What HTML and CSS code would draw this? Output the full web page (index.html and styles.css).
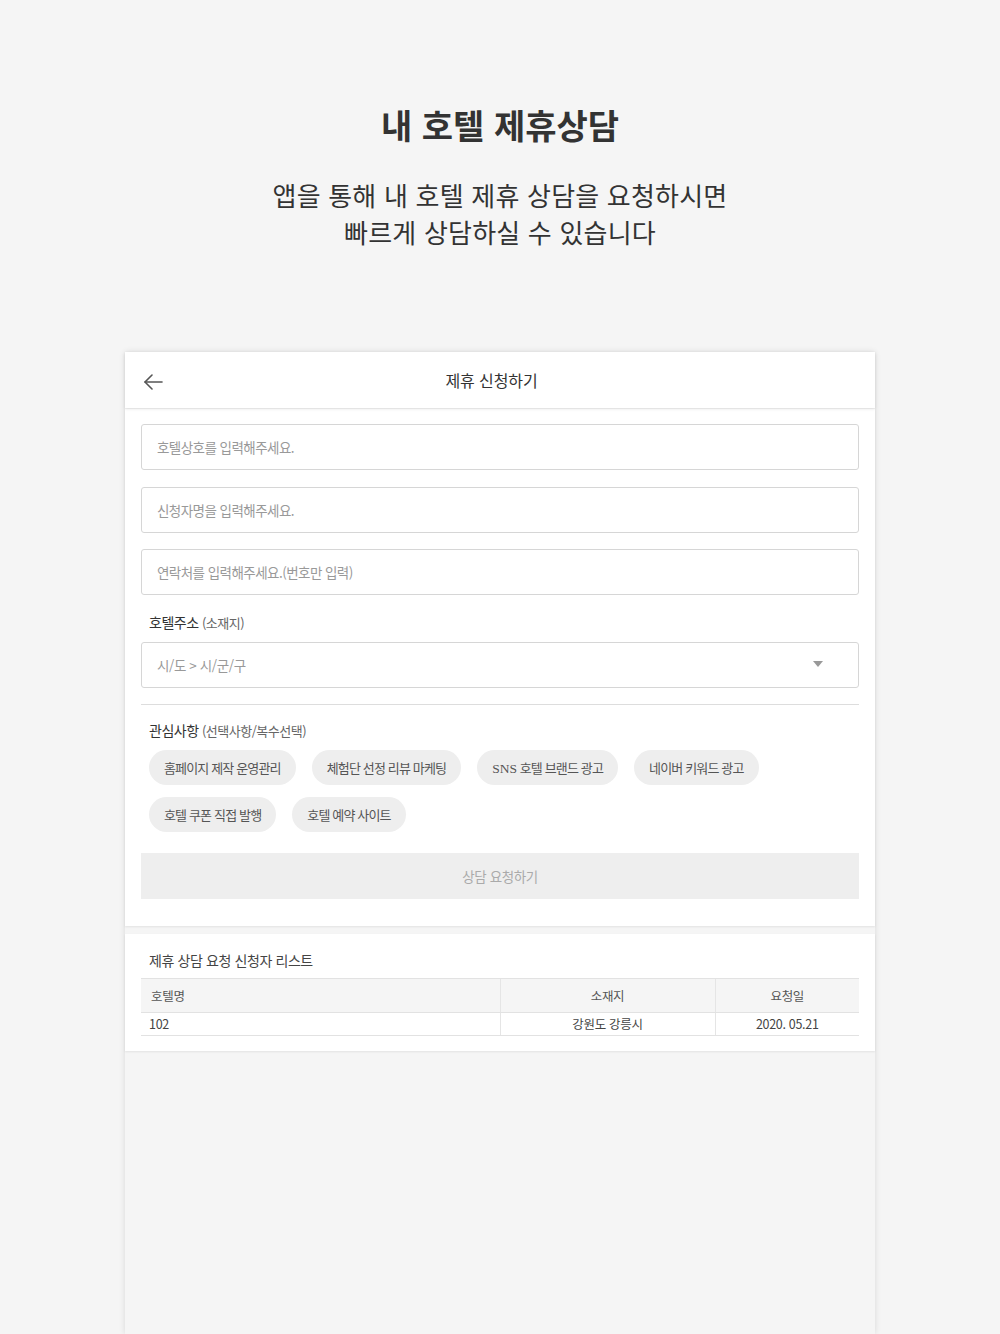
FILE: index.html
```html
<!DOCTYPE html>
<html lang="ko">
<head>
    <meta charset="UTF-8">
    <meta name="viewport" content="width=device-width, initial-scale=1.0">
    <title>내 호텔 제휴상담</title>
    <link rel="stylesheet" href="styles.css">
</head>
<body>
    <div class="intro">
        <h1 class="headline">내 호텔 제휴상담</h1>
        <p class="lead">앱을 통해 내 호텔 제휴 상담을 요청하시면<br>빠르게 상담하실 수 있습니다</p>
    </div>
    <div class="frame">
        <div class="topbar">
            <button type="button" class="back-btn" aria-label="뒤로">
                <svg width="20" height="16" viewBox="0 0 20 16" fill="none" stroke="#555" stroke-width="1.6" stroke-linecap="round" stroke-linejoin="round">
                    <path d="M19 8H2"/>
                    <path d="M9 1L2 8l7 7"/>
                </svg>
            </button>
            <div class="topbar-title">제휴 신청하기</div>
        </div>

        <form class="card form-card" autocomplete="off">
            <input type="text" class="field" placeholder="호텔상호를 입력해주세요.">
            <input type="text" class="field" placeholder="신청자명을 입력해주세요.">
            <input type="tel" class="field" placeholder="연락처를 입력해주세요.(번호만 입력)">

            <div class="label">호텔주소 <span class="label-sub">(소재지)</span></div>
            <div class="select">
                <span class="select-text">시/도 &gt; 시/군/구</span>
                <span class="select-caret"></span>
            </div>

            <div class="divider"></div>

            <div class="label label-tight">관심사항 <span class="label-sub">(선택사항/복수선택)</span></div>
            <div class="chips">
                <span class="chip">홈페이지 제작 운영관리</span>
                <span class="chip">체험단 선정 리뷰 마케팅</span>
                <span class="chip"><span class="latin">SNS</span> 호텔 브랜드 광고</span>
                <span class="chip">네이버 키워드 광고</span>
                <span class="chip">호텔 쿠폰 직접 발행</span>
                <span class="chip">호텔 예약 사이트</span>
            </div>

            <button type="button" class="submit-btn">상담 요청하기</button>
        </form>

        <div class="card list-card">
            <div class="list-title">제휴 상담 요청 신청자 리스트</div>
            <table class="list">
                <colgroup>
                    <col class="w-name">
                    <col class="w-area">
                    <col class="w-date">
                </colgroup>
                <thead>
                    <tr>
                        <th class="col-name">호텔명</th>
                        <th class="col-area">소재지</th>
                        <th class="col-date">요청일</th>
                    </tr>
                </thead>
                <tbody>
                    <tr>
                        <td class="col-name">102</td>
                        <td class="col-area">강원도 강릉시</td>
                        <td class="col-date">2020. 05.21</td>
                    </tr>
                </tbody>
            </table>
        </div>
    </div>
</body>
</html>
```

FILE: styles.css
```css
body {
    background: #f5f5f5;
    margin: 0;
    height: 1334px;
    overflow: hidden;
    font-family: "Noto Sans CJK KR", "Noto Sans", sans-serif;
    color: #333;
}
.intro {
    padding-top: 102px;
    text-align: center;
}
.headline {
    margin: 0;
    font-size: 34px;
    line-height: 46px;
    font-weight: bold;
    color: #333;
    letter-spacing: 0;
}
.lead {
    margin: 28px 0 0 0;
    font-size: 26px;
    line-height: 37px;
    color: #333;
    letter-spacing: 0.2px;
}
.frame {
    width: 750px;
    height: 982px;
    margin: 102px auto 0 auto;
    background: #f5f5f5;
    box-shadow: 0 0 6px rgba(0,0,0,0.12);
}
.topbar {
    height: 56px;
    background: #fff;
    display: flex;
    align-items: center;
    position: relative;
    box-shadow: 0 1px 3px rgba(0,0,0,0.1);
    z-index: 1;
}
.back-btn {
    background: none;
    border: none;
    padding: 0;
    margin: 4px 0 0 17px;
    width: 22px;
    height: 22px;
    display: flex;
    align-items: center;
    justify-content: center;
    cursor: pointer;
}
.topbar-title {
    flex: 1;
    text-align: center;
    font-size: 16px;
    letter-spacing: -0.1px;
    color: #333;
    padding-right: 56px;
}
.card {
    background: #fff;
    box-shadow: 0 1px 2px rgba(0,0,0,0.08);
}
.form-card {
    display: flex;
    flex-direction: column;
    padding: 15px 16px 27px 16px;
    margin-top: 1px;
}
.field {
    height: 46px;
    box-sizing: border-box;
    border: 1px solid #d6d6d6;
    border-radius: 3px;
    padding: 0 15px;
    font-family: inherit;
    font-size: 13.5px;
    letter-spacing: -0.55px;
    color: #333;
    margin-bottom: 16.5px;
}
.field::placeholder {
    color: #999;
}
.field:focus {
    outline: none;
    border-color: #999;
}
.label {
    font-size: 14px;
    line-height: 20px;
    letter-spacing: -0.5px;
    color: #333;
    padding-left: 8px;
    margin: 0 0 9px 0;
}
.label-tight {
    margin: 15px 0 9px 0;
}
.label-sub {
    font-size: 13px;
    color: #666;
}
.select {
    height: 46px;
    box-sizing: border-box;
    border: 1px solid #d6d6d6;
    border-radius: 3px;
    padding: 0 35px 0 15px;
    display: flex;
    align-items: center;
    justify-content: space-between;
}
.select-text {
    font-size: 13.5px;
    letter-spacing: -0.4px;
    color: #999;
    padding-top: 1px;
}
.select-caret {
    width: 0;
    height: 0;
    border-left: 5px solid transparent;
    border-right: 5px solid transparent;
    border-top: 6px solid #999;
    margin-bottom: 2px;
}
.divider {
    border-bottom: 1px solid #ddd;
    margin-top: 16px;
}
.chips {
    display: flex;
    flex-wrap: wrap;
    gap: 12px 16px;
    padding-left: 8px;
}
.chip {
    height: 35px;
    line-height: 35px;
    padding: 0 15px;
    border-radius: 18px;
    background: #eee;
    font-size: 13px;
    letter-spacing: -0.85px;
    color: #555;
}
.latin {
    font-family: "Liberation Serif", serif;
    font-size: 13.5px;
    letter-spacing: 0;
}
.submit-btn {
    margin-top: 21px;
    height: 46px;
    border: none;
    border-radius: 0;
    background: #eee;
    font-family: inherit;
    font-size: 13.5px;
    letter-spacing: -0.4px;
    color: #aaa;
    cursor: pointer;
}
.list-card {
    margin-top: 8px;
    padding: 16px 16px 15px 16px;
}
.list-title {
    font-size: 14px;
    line-height: 20px;
    letter-spacing: -0.4px;
    color: #444;
    padding-left: 8px;
    margin-bottom: 8px;
}
.list {
    width: 100%;
    table-layout: fixed;
    border-collapse: collapse;
    font-size: 12.5px;
    letter-spacing: -0.3px;
    color: #444;
}
.w-name { width: 359px; }
.w-area { width: 215px; }
.w-date { width: 144px; }
.list th {
    background: #f5f5f5;
    font-weight: normal;
    height: 33px;
    padding: 0;
    border-top: 1px solid #e2e2e2;
    border-bottom: 1px solid #e2e2e2;
    color: #555;
}
.list td {
    height: 22px;
    padding: 0;
    border-bottom: 1px solid #e2e2e2;
}
.list th + th,
.list td + td {
    border-left: 1px solid #e5e5e5;
}
th.col-name {
    text-align: left;
    padding-left: 10px;
}
td.col-name {
    padding-left: 8px;
}
.col-area,
.col-date {
    text-align: center;
}
```
